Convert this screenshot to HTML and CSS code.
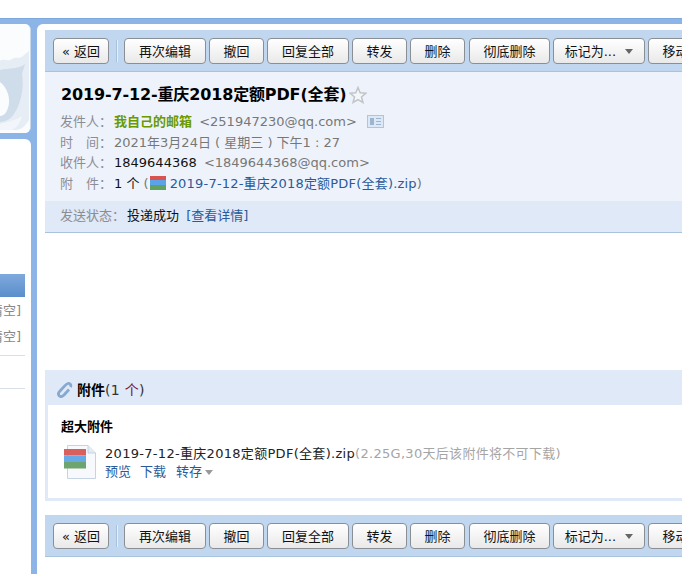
FILE: index.html
```html
<!DOCTYPE html>
<html lang="zh-CN">
<head>
<meta charset="utf-8">
<title>邮件</title>
<link rel="stylesheet" href="styles.css">
</head>
<body>
<div class="frame">
  <aside class="side">
    <div class="side-top">
      <svg class="side-art" width="31" height="109" viewBox="0 0 31 109">
        <rect width="31" height="109" fill="#fbfcfe"/>
        <path d="M0 37 C4 34 8 38 12 35 C16 32 20 36 24 31 L29 27 V96 C24 104 20 106 14 106 H0Z" fill="#e6edf5"/>
        <path d="M0 46 C8 44 20 45 25 40 L22 50 C24 62 22 78 14 90 C10 96 4 98 0 98Z" fill="#cfdcea"/>
        <path d="M0 58 C8 64 11 76 8 84 C6 90 3 92 0 92Z" fill="#fbfcfe"/>
        <path d="M0 100 C8 98 16 96 22 92 C20 100 16 104 12 106 H0Z" fill="#f2f6fa"/>
      </svg>
    </div>
    <div class="side-list">
      <div class="side-sel"></div>
      <div class="side-item">清空]</div>
      <div class="side-item">清空]</div>
      <div class="side-rule first"></div>
      <div class="side-rule second"></div>
    </div>
  </aside>
  <main class="main">
    <div class="toolbar">
      <span class="btn w56">« 返回</span><span class="sep"></span>
      <span class="btn w82">再次编辑</span><span class="btn w55">撤回</span><span class="btn w82">回复全部</span><span class="btn w55">转发</span><span class="btn w55">删除</span><span class="btn w81 gap">彻底删除</span><span class="btn w92">标记为... <i class="caret"></i></span><span class="btn w55">移动</span>
    </div>
    <section class="head">
      <h1 class="subject">2019-7-12-重庆2018定额PDF(全套)<svg class="star" width="18" height="18" viewBox="0 0 18 18"><path d="M9 1.500 L11.200 6.800 L17 7.200 L12.500 10.900 L14 16.500 L9 13.500 L4 16.500 L5.500 10.900 L1 7.200 L6.800 6.800Z" fill="#f4f6f9" stroke="#c0c5ca" stroke-width="1.500"/></svg></h1>
      <div class="meta"><span class="lbl">发件人：</span><b class="sender">我自己的邮箱</b> <span class="addr gapped">&lt;251947230@qq.com&gt;</span>
        <svg class="card" width="17" height="13" viewBox="0 0 17 13"><rect x=".5" y=".5" width="16" height="12" fill="#dce8f5" stroke="#b0c4da"/><rect x="3" y="3" width="4" height="7" fill="#9db5cf"/><path d="M9 3.500h5M9 6.500h5M9 9.500h5" stroke="#9db5cf"/></svg>
      </div>
      <div class="meta"><span class="lbl">时&emsp;间：</span><span class="addr">2021年3月24日 ( 星期三 ) 下午1 : 27</span></div>
      <div class="meta"><span class="lbl">收件人：</span><span class="dark">1849644368</span> <span class="addr gapped">&lt;1849644368@qq.com&gt;</span></div>
      <div class="meta"><span class="lbl">附&emsp;件：</span><span class="dark">1 个</span> <span class="addr">(</span><svg class="zip" width="21" height="14" viewBox="0 0 21 14"><rect width="16" height="4" x="1" y="0" fill="#d9534f"/><rect width="16" height="5" x="1" y="4" fill="#5ba3e6"/><rect width="16" height="5" x="1" y="9" fill="#5fa35f"/></svg><span class="link wide">2019-7-12-重庆2018定额PDF(全套).zip</span><span class="addr">)</span></div>
      <div class="status"><span class="lbl">发送状态：</span><span class="dark">投递成功</span> <span class="link gapped">[查看详情]</span></div>
    </section>
    <div class="body"></div>
    <section class="attach">
      <div class="attach-head">
        <svg class="clip" width="16" height="16" viewBox="0 0 16 16"><path d="M13.500 5 C14.500 3 13 1 11 1.500 C10 1.800 9 2.500 8 3.600 L3 9 C1.500 10.500 1 12.500 2.200 13.800 C3.500 15 5.500 14.500 7 13 L12 7.500" fill="none" stroke="#86a9cf" stroke-width="2.800"/></svg>
        <b class="attach-title">附件</b><span class="attach-count">(1 <span class="maroon">个</span>)</span>
      </div>
      <div class="attach-box">
        <div class="big-title">超大附件</div>
        <div class="file">
          <svg class="file-icon" width="34" height="36" viewBox="0 0 34 36"><path d="M3.500 .5H24L31.500 8V33.500H3.500Z" fill="#f7f9fc" stroke="#c5d3e3"/><path d="M24 .5V8H31.500" fill="#e3ebf4" stroke="#c5d3e3"/><rect x="0" y="4" width="22" height="6.500" fill="#d9605c"/><rect x="0" y="10.500" width="22" height="6.500" fill="#68aae8"/><rect x="0" y="17" width="22" height="6.500" fill="#6ea46e"/></svg>
          <div class="file-info">
            <div class="file-name">2019-7-12-重庆2018定额PDF(全套).zip<span class="file-note">(2.25G,30天后该附件将不可下载)</span></div>
            <div class="file-ops"><span class="link">预览</span><span class="link">下载</span><span class="link">转存</span><i class="caret small"></i></div>
          </div>
        </div>
      </div>
    </section>
    <div class="toolbar bottom">
      <span class="btn w56">« 返回</span><span class="sep"></span>
      <span class="btn w82">再次编辑</span><span class="btn w55">撤回</span><span class="btn w82">回复全部</span><span class="btn w55">转发</span><span class="btn w55">删除</span><span class="btn w81 gap">彻底删除</span><span class="btn w92">标记为... <i class="caret"></i></span><span class="btn w55">移动</span>
    </div>
  </main>
</div>
</body>
</html>
```
FILE: styles.css
```css
* { box-sizing: border-box; }
html, body { margin: 0; height: 100%; overflow: hidden; background: #fff; }
body {
  padding-top: 18px;
  font: 13px/20px "DejaVu Sans", "Noto Sans CJK SC", sans-serif;
  color: #000;
}
.frame {
  display: flex;
  width: 1000px;
  height: 556px;
  background: #8cb4e6;
  border-top: 1px solid #7ea9dc;
  padding-top: 5px;
}
.side {
  width: 31px;
  margin-right: 6px;
  display: flex;
  flex-direction: column;
  gap: 6px;
}
.side-top { height: 109px; border-radius: 0 6px 6px 0; overflow: hidden; border-right: 1px solid #c9d9ea; background: #fff; }
.side-art { display: block; }
.side-list { flex: 1; background: #fff; border-radius: 0 6px 0 0; padding-top: 135px; color: #888; }
.side-sel { width: 25px; height: 23px; background: linear-gradient(#7ea9dc, #5b8ecb); }
.side-item { width: 21px; height: 25px; font-size: 13px; line-height: 25px; white-space: nowrap; display: flex; justify-content: flex-end; overflow: hidden; margin-top: 1px; }
.side-rule { height: 1px; background: #d9dfe6; width: 25px; }
.side-rule.first { margin-top: 6px; }
.side-rule.second { margin-top: 32px; }
.main {
  flex: 1;
  background: #fff;
  border-radius: 6px 0 0 0;
  padding: 6px 0 0 8px;
}
.toolbar {
  height: 42px;
  background: #c1d7f0;
  border-bottom: 1px solid #a8c3de;
  padding: 8px 0 0 8px;
  display: flex;
  gap: 3px;
}
.btn {
  flex: none;
  height: 26px;
  border: 1px solid #8a8f96;
  border-radius: 4px;
  background: linear-gradient(#fff, #e9e9e9);
  font-size: 13px;
  line-height: 25px;
  text-align: center;
  color: #111;
  white-space: nowrap;
}
.w55 { width: 55px; }
.w56 { width: 56px; }
.w81 { width: 81px; }
.w82 { width: 82px; }
.w92 { width: 92px; }
.gap { margin-left: 1px; }
.sep { width: 2px; height: 22px; margin: 2px 3px 0 4px; background: #e6eef8; border-left: 1px solid #a9c1dc; flex: none; }
.caret { display: inline-block; width: 0; height: 0; border: 4px solid transparent; border-top: 5px solid #666; border-bottom: 0; margin-left: 5px; vertical-align: 2px; }
.caret.small { border-top-color: #999; margin-left: 4px; vertical-align: 1px; }
.head { background: #eef3fb; padding-top: 12px; height: 160px; }
.subject { margin: 0 0 0 16px; font-size: 16px; line-height: 22px; font-weight: bold; letter-spacing: -.14px; display: flex; align-items: center; }
.star { margin-left: 3px; flex: none; }
.meta { margin-left: 15px; height: 20.500px; line-height: 20px; color: #777; white-space: nowrap; }
.meta:first-of-type { margin-top: 6px; }
.lbl { color: #8c8c94; padding-right: 2px; }
.sender { color: #6a9a00; }
.addr { color: #777; }
.gapped { margin-left: 3px; }
.wide { letter-spacing: .2px; }
.dark { color: #111; }
.link { color: #2a5a99; }
.card { vertical-align: -2px; margin-left: 6px; }
.zip { vertical-align: -2px; }
.status { margin-top: 7px; padding-left: 15px; height: 32px; line-height: 30px; background: #dfe9f7; border-bottom: 1px solid #a8c3de; }
.body { height: 138px; }
.attach-head { height: 35px; background: #dfe9f7; padding: 4px 0 0 12px; display: flex; align-items: center; font-size: 14px; }
.clip { margin-right: 4px; }
.attach-title { font-size: 14px; }
.attach-count { color: #333; font-size: 14px; letter-spacing: .3px; }
.maroon { color: #7a1030; }
.attach-box { height: 96px; border: 3px solid #dfe9f7; border-top: 0; padding: 12px 0 0 13px; }
.big-title { font-size: 13px; font-weight: bold; line-height: 20px; }
.file { display: flex; margin-top: 8px; }
.file-icon { flex: none; margin: 0 7px 0 3px; }
.file-info { line-height: 18px; }
.file-name { white-space: nowrap; color: #222; letter-spacing: .3px; }
.file-note { color: #a5a5a5; }
.file-ops { display: flex; align-items: center; gap: 9px; }
.file-ops .link:last-of-type { margin-left: 1px; }
.file-ops .caret { margin-left: -6px; }
.bottom { margin-top: 14px; }
```
